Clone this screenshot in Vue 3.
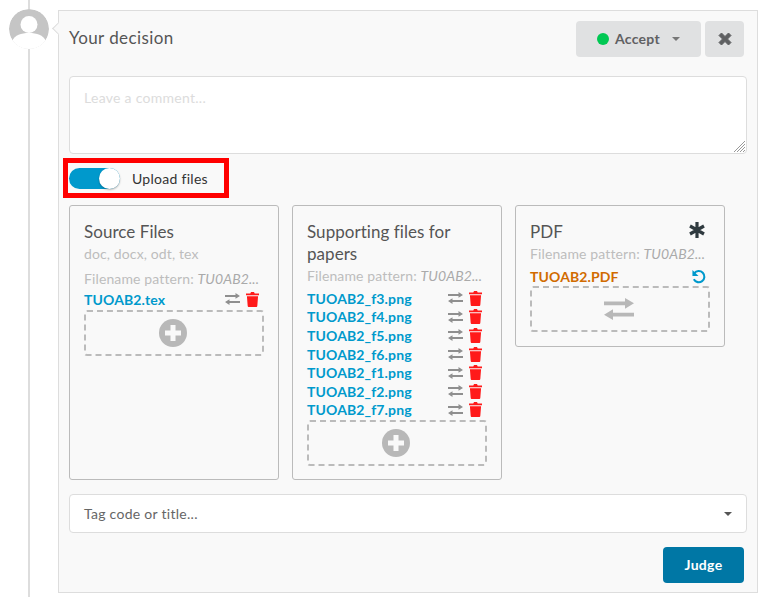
<script setup>
const sourceFiles = ['TUOAB2.tex']
const supportingFiles = [
  'TUOAB2_f3.png',
  'TUOAB2_f4.png',
  'TUOAB2_f5.png',
  'TUOAB2_f6.png',
  'TUOAB2_f1.png',
  'TUOAB2_f2.png',
  'TUOAB2_f7.png',
]
const exchangePath = 'M0 2.600h10.500V0L15 3.900 10.500 7.800V5.200H0zM15 10.800H4.500V8.200L0 12.100 4.500 16V13.400H15z'
const trashPath = 'M4.6 1.6 5.4 0h3.2l.8 1.6H14v1.8H0V1.6zM1 4.4h12l-.8 10.2c0 .8-.6 1.4-1.3 1.4H3.100c-.7 0-1.300-.6-1.300-1.400z'
</script>

<template>
  <div class="page">
    <div class="line"></div>
    <svg class="avatar" viewBox="0 0 40 40">
      <circle cx="20" cy="20" r="20" fill="#c5c5c5" />
      <circle cx="20" cy="15.500" r="8.500" fill="#fff" />
      <path d="M3 32c3-6 9-8 17-8s14 2 17 8l-5 8H8z" fill="#fff" />
    </svg>

    <div class="decision">
      <div class="pointer"></div>
      <div class="head">
        <span class="title">Your decision</span>
        <div class="actions">
          <button class="btn accept">
            <span class="dot"></span>
            <span>Accept</span>
            <span class="caret small"></span>
          </button>
          <button class="btn close">
            <svg width="14" height="14" viewBox="0 0 14 14">
              <path d="M3.500 1 7 4.500 10.500 1 13 3.500 9.500 7 13 10.500 10.500 13 7 9.500 3.500 13 1 10.500 4.500 7 1 3.500z" fill="#5f6062" stroke="#5f6062" stroke-linejoin="round" />
            </svg>
          </button>
        </div>
      </div>

      <div class="comment">
        <span>Leave a comment...</span>
        <svg class="grip" width="12" height="12" viewBox="0 0 12 12">
          <path d="M12 1 1 12M12 4 4 12M12 7 7 12M12 10 10 12" stroke="#999" stroke-width="1" />
        </svg>
      </div>

      <div class="toggle-row">
        <div class="toggle"><span class="knob"></span></div>
        <span>Upload files</span>
      </div>

      <div class="cards">
        <div class="card">
          <h4>Source Files</h4>
          <div class="hint">doc, docx, odt, tex</div>
          <div class="hint pattern">Filename pattern: <i>TU0AB2...</i></div>
          <div class="files">
            <div v-for="f in sourceFiles" :key="f" class="file">
              <a>{{ f }}</a>
              <div class="file-icons">
                <svg width="15" height="12" viewBox="0 0 15 16" preserveAspectRatio="none"><path :d="exchangePath" fill="#8f8f8f" /></svg>
                <svg width="13" height="15" viewBox="0 0 14 16"><path :d="trashPath" fill="#ff1a1a" /></svg>
              </div>
            </div>
          </div>
          <div class="drop">
            <svg width="28" height="28" viewBox="0 0 28 28">
              <circle cx="14" cy="14" r="14" fill="#b8b8b8" />
              <path d="M11.500 6h5v5.500H22v5h-5.500V22h-5v-5.500H6v-5h5.500z" fill="#f9f9f9" />
            </svg>
          </div>
        </div>

        <div class="card">
          <h4>Supporting files for papers</h4>
          <div class="hint">Filename pattern: <i>TU0AB2...</i></div>
          <div class="files">
            <div v-for="f in supportingFiles" :key="f" class="file">
              <a>{{ f }}</a>
              <div class="file-icons">
                <svg width="15" height="12" viewBox="0 0 15 16" preserveAspectRatio="none"><path :d="exchangePath" fill="#8f8f8f" /></svg>
                <svg width="13" height="15" viewBox="0 0 14 16"><path :d="trashPath" fill="#ff1a1a" /></svg>
              </div>
            </div>
          </div>
          <div class="drop">
            <svg width="28" height="28" viewBox="0 0 28 28">
              <circle cx="14" cy="14" r="14" fill="#b8b8b8" />
              <path d="M11.500 6h5v5.500H22v5h-5.500V22h-5v-5.500H6v-5h5.500z" fill="#f9f9f9" />
            </svg>
          </div>
        </div>

        <div class="card short">
          <div class="pdf-title">
            <h4>PDF</h4>
            <svg class="star" width="16" height="16" viewBox="0 0 16 16">
              <path d="M8 0v16M1 4l14 8M15 4 1 12" stroke="#2f3a3f" stroke-width="3.200" />
            </svg>
          </div>
          <div class="hint">Filename pattern: <i>TU0AB2...</i></div>
          <div class="file pdf">
            <a>TUOAB2.PDF</a>
            <svg width="15" height="15" viewBox="0 0 16 16" fill="none">
              <path d="M3.500 4.500A6 6 0 1 1 3 11" stroke="#0099cc" stroke-width="2.200" />
              <path d="M1.500 1v6.500H8z" fill="#0099cc" />
            </svg>
          </div>
          <div class="drop">
            <svg width="30" height="22" viewBox="0 0 15 16" preserveAspectRatio="none"><path :d="exchangePath" fill="#b8b8b8" /></svg>
          </div>
        </div>
      </div>

      <div class="tags">
        <span>Tag code or title...</span>
        <span class="caret"></span>
      </div>

      <div class="foot">
        <button class="btn judge">Judge</button>
      </div>
    </div>
  </div>
</template>

<style>
body {
  margin: 0;
  background: #fff;
}
</style>

<style scoped>
.page {
  position: relative;
  height: 597px;
  overflow: hidden;
  padding: 10px 7px 0 58px;
  box-sizing: border-box;
  font-family: Lato, "Open Sans", sans-serif;
  letter-spacing: 0.28px;
  color: #4a4a4a;
}

.line {
  position: absolute;
  left: 28px;
  top: 0;
  bottom: 0;
  width: 2px;
  background: #ddd;
}

.avatar {
  position: absolute;
  left: 9px;
  top: 9px;
  width: 40px;
  height: 40px;
  background: #fff;
  border-radius: 50%;
}

.decision {
  position: relative;
  height: 583px;
  box-sizing: border-box;
  padding: 10px 10px 0 10px;
  background: #f9f9f9;
  border: 1px solid #ddd;
}

.pointer {
  position: absolute;
  left: -5px;
  top: 13px;
  width: 8px;
  height: 8px;
  background: #f9f9f9;
  border-left: 1px solid #ddd;
  border-bottom: 1px solid #ddd;
  transform: rotate(45deg);
}

.head {
  display: flex;
  justify-content: space-between;
  align-items: center;
  height: 36px;
  padding-right: 3px;
}

.title {
  margin-top: -3px;
  font-size: 17px;
  letter-spacing: 0.42px;
  color: #555;
}

.actions {
  display: flex;
  gap: 4px;
}

.btn {
  display: flex;
  align-items: center;
  justify-content: center;
  height: 36px;
  padding: 0 0 1px;
  border: 0;
  border-radius: 4px;
  font-family: inherit;
  font-size: 14px;
  font-weight: 700;
  letter-spacing: 0.28px;
}

.accept {
  width: 125px;
  gap: 6px;
  background: #e0e1e2;
  color: #5f6062;
}

.close {
  width: 39px;
  background: #e0e1e2;
}

.dot {
  width: 12px;
  height: 12px;
  border-radius: 50%;
  background: #00c853;
}

.caret {
  width: 0;
  height: 0;
  border-left: 4px solid transparent;
  border-right: 4px solid transparent;
  border-top: 4px solid #555;
}

.caret.small {
  margin-left: 6px;
  border-top-color: #777;
}

.comment {
  position: relative;
  box-sizing: border-box;
  height: 78px;
  margin-top: 19px;
  padding: 12px 14px;
  background: #fff;
  border: 1px solid #ddd;
  border-radius: 4px;
  font-size: 14px;
  color: #dcdcdc;
}

.grip {
  position: absolute;
  right: 1px;
  bottom: 1px;
}

.toggle-row {
  display: flex;
  align-items: center;
  gap: 12px;
  box-sizing: border-box;
  width: 166px;
  height: 40px;
  margin: 4px 0 0 -6px;
  padding-left: 1px;
  border: 5px solid #f00;
  font-size: 14px;
  color: #333;
}

.toggle {
  position: relative;
  width: 51px;
  height: 21px;
  border-radius: 11px;
  background: #0099cc;
}

.knob {
  position: absolute;
  right: 0;
  top: 0;
  width: 21px;
  height: 21px;
  border-radius: 50%;
  background: #fff;
  box-shadow: 0 1px 2px rgba(0, 0, 0, 0.3);
}

.cards {
  display: flex;
  align-items: flex-start;
  gap: 13px;
  margin-top: 7px;
}

.card {
  box-sizing: border-box;
  width: 210px;
  height: 275px;
  padding: 15px 14px;
  border: 1px solid #bbb;
  border-radius: 3px;
}

.card.short {
  height: 142px;
}

h4 {
  margin: 0 0 1px;
  font-size: 17px;
  font-weight: 400;
  line-height: 22px;
  letter-spacing: 0.05px;
  color: #555;
}

.pdf-title {
  display: flex;
  justify-content: space-between;
  align-items: center;
}

.star {
  margin: -5px 5px 0 0;
}

.hint {
  font-size: 14px;
  line-height: 20px;
  letter-spacing: 0.12px;
  color: #bdbdbd;
  white-space: nowrap;
}

.hint i {
  color: #aaa;
}

.pattern {
  margin: 5px 0 -2px;
}

.files {
  margin-top: 3px;
}

.file {
  display: flex;
  justify-content: space-between;
  align-items: center;
  height: 18.600px;
  font-size: 14px;
  font-weight: 700;
  letter-spacing: 0.12px;
  color: #0099cc;
}

.file-icons {
  display: flex;
  align-items: center;
  gap: 6px;
  padding-right: 5px;
}

.file.pdf {
  margin: 3px 0 -1px;
  color: #d16b00;
  padding-right: 4px;
}

.drop {
  display: flex;
  align-items: center;
  justify-content: center;
  box-sizing: border-box;
  width: 180px;
  height: 46px;
  margin-top: 1px;
  padding-right: 3px;
  border: 2px dashed #bbb;
  border-radius: 3px;
}

.tags {
  display: flex;
  align-items: center;
  justify-content: space-between;
  box-sizing: border-box;
  height: 39px;
  margin-top: 14px;
  padding: 0 14px;
  background: #fff;
  border: 1px solid #ddd;
  border-radius: 4px;
  font-size: 14px;
  color: #666;
}

.foot {
  display: flex;
  justify-content: flex-end;
  margin-top: 14px;
  padding-right: 3px;
}

.judge {
  width: 81px;
  background: #0077a5;
  color: #fff;
}
</style>
